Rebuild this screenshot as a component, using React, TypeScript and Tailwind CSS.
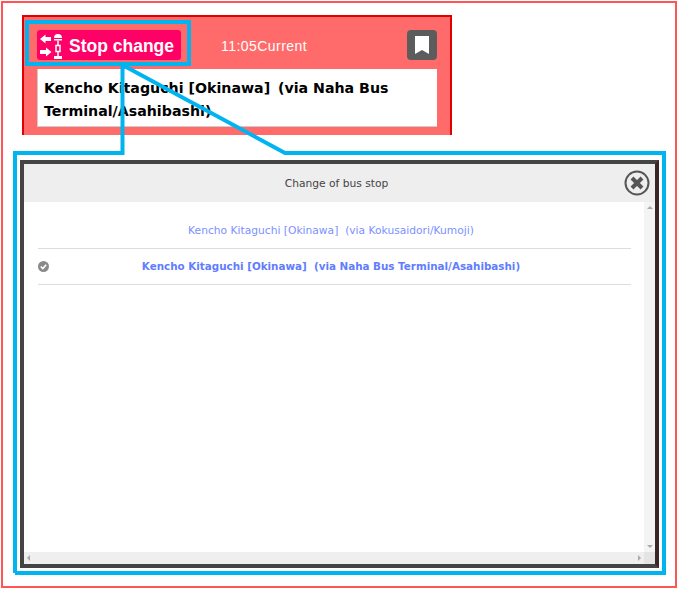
const TITLE_FONT = "font-['DejaVu_Sans',sans-serif]";

function StopIcon() {
  return (
    <svg width="26" height="26" viewBox="38 32 26 26" className="shrink-0">
      <path d="M40 38 45.500 33.500V36H51V40H45.500V42.500z" fill="#fff" />
      <path d="M51.500 51 46 46.500V49H40V53H46V55.500z" fill="#fff" />
      <path d="M54 37a4 4 0 0 1 8 0zM54 38h8v1.500h-8z" fill="#fff" />
      <path d="M58 39.500V44M56 44.500h4v6h-4zM58 50.500V55" stroke="#fff" strokeWidth="1.500" fill="none" />
      <path d="M54 55h8v3h-8z" fill="#fff" />
    </svg>
  );
}

function Rows() {
  return (
    <div className="flex-1 pl-[14px] pr-[13px] pt-[11px]">
      <div className="h-[36px] pt-[1px] pr-[7px] border-b border-[#ddd] flex items-center justify-center text-[10.7px] text-[#7d90ff]">
        Kencho Kitaguchi [Okinawa]&nbsp;&nbsp;(via Kokusaidori/Kumoji)
      </div>
      <div className="relative h-[36px] pt-[1px] pr-[7px] border-b border-[#ddd] flex items-center justify-center text-[10.35px] font-bold text-[#5f7dff]">
        <svg width="11" height="11" viewBox="0 0 11 11" className="absolute left-0 top-[12px]">
          <circle cx="5.500" cy="5.500" r="5.500" fill="#8a8a8a" />
          <path d="M2.800 5.500 4.800 7.500 8.200 3.800" stroke="#fff" strokeWidth="1.600" fill="none" />
        </svg>
        Kencho Kitaguchi [Okinawa]&nbsp;&nbsp;(via Naha Bus Terminal/Asahibashi)
      </div>
    </div>
  );
}

export default function App() {
  return (
    <div className="relative w-[679px] h-[590px] bg-white font-['DejaVu_Sans',sans-serif] overflow-hidden">
      <div className="ml-px mt-px w-[676px] h-[587px] border-2 border-[#ff5555] box-border pl-[19px] pt-[12px]">
        {/* route card */}
        <div className="w-[430px] h-[120px] bg-[#ff6b6b] border-x-2 border-t-2 border-[#e00000] px-[13px] pt-[13px]">
          <div className="flex items-center h-[30px]">
            <div className="w-[144px] h-[30px] bg-[#ff0066] rounded-[3px] flex items-center pl-[1px] pt-[1px] gap-[5px] text-white font-bold text-[17.5px] font-['Liberation_Sans',sans-serif] whitespace-nowrap">
              <StopIcon />
              <span className="pt-[1px]">Stop change</span>
            </div>
            <span className="ml-[40px] pt-[3px] text-[14px] text-[#fff] font-['Liberation_Sans',sans-serif] tracking-[0.45px]">11:05Current</span>
            <div className="ml-auto w-[30px] h-[30px] bg-[#5c5c5c] rounded-[4px] flex items-center justify-center">
              <svg width="14" height="18" viewBox="0 0 14 18">
                <path d="M0 0h14v18l-7-4-7 4z" fill="#fff" />
              </svg>
            </div>
          </div>
          <div className={`mt-[9px] h-[58px] bg-white border-l border-b border-[#ccc] pl-[6px] pt-[8px] text-[14.2px] leading-[22.5px] font-bold text-black ${TITLE_FONT}`}>
            Kencho Kitaguchi [Okinawa]&nbsp;&#8201;(via Naha Bus Terminal/Asahibashi)
          </div>
        </div>

        {/* modal */}
        <div className="mt-[25px] ml-[-2px] w-[639px] h-[408px] border-4 border-[#444] border-r-[#3a2626] bg-white flex flex-col">
          <div className="h-[38px] pt-[2px] pr-[6px] shrink-0 bg-[#eeeeee] flex items-center justify-center text-[10.7px] text-[#444] relative">
            Change of bus stop
            <svg width="26" height="26" viewBox="0 0 26 26" className="absolute right-[5px] top-[6px]">
              <circle cx="13" cy="13" r="11.500" fill="#eee" stroke="#555" strokeWidth="2" />
              <path d="M8 8 18 18M18 8 8 18" stroke="#555" strokeWidth="4" />
            </svg>
          </div>
          <div className="flex-1 flex min-h-0">
            <Rows />
            <div className="w-[11px] bg-[#f4f4f4] flex flex-col items-center justify-between py-[4px]">
              <div className="w-0 h-0 border-x-[3px] border-x-transparent border-b-[3px] border-b-[#aaa]" />
              <div className="w-0 h-0 border-x-[3px] border-x-transparent border-t-[3px] border-t-[#aaa]" />
            </div>
          </div>
          <div className="h-[12px] shrink-0 bg-[#efefef] flex items-center pl-[3px]">
            <div className="w-0 h-0 border-y-[3px] border-y-transparent border-r-[3px] border-r-[#aaa]" />
            <div className="ml-auto mr-[3px] w-0 h-0 border-y-[3px] border-y-transparent border-l-[3px] border-l-[#aaa]" />
            <div className="w-[11px] h-full bg-[#e4e4e4]" />
          </div>
        </div>
      </div>

      {/* callout annotation */}
      <svg width="679" height="590" className="absolute left-0 top-0 pointer-events-none">
        <rect x="27" y="22" width="162" height="42" fill="none" stroke="#00b4f0" strokeWidth="4" />
        <path d="M15 573V153H122.500V65" fill="none" stroke="#00b4f0" strokeWidth="4" />
        <path d="M122.500 65 285 153H664V573H15" fill="none" stroke="#00b4f0" strokeWidth="4" />
      </svg>
    </div>
  );
}
